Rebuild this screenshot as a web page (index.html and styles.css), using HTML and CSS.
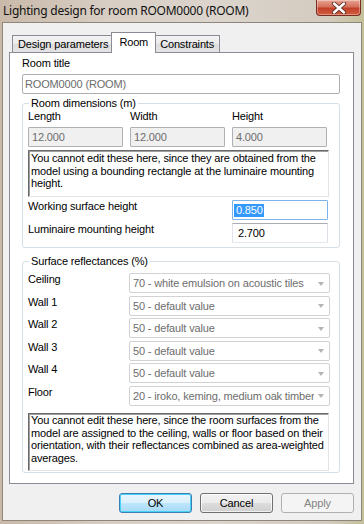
FILE: index.html
```html
<!DOCTYPE html>
<html>
<head>
<meta charset="utf-8">
<link rel="stylesheet" href="styles.css">
</head>
<body>
<div class="window">
  <div class="titlebar">
    <span class="title">Lighting design for room ROOM0000 (ROOM)</span>
    <div class="close">
      <svg width="16" height="12" viewBox="0 0 16 12">
        <path d="M3 1.5 L13 10.5 M13 1.5 L3 10.5" stroke="#5a2a22" stroke-width="4.2" stroke-linecap="round"/>
        <path d="M3 1.5 L13 10.5 M13 1.5 L3 10.5" stroke="#ffffff" stroke-width="2.4" stroke-linecap="round"/>
      </svg>
    </div>
  </div>
  <div class="face">
    <div class="tabs">
      <div class="tab">Design parameters</div>
      <div class="tab active">Room</div>
      <div class="tab">Constraints</div>
    </div>
    <div class="panel">
      <div class="label">Room title</div>
      <div class="input readonly title-input">ROOM0000 (ROOM)</div>

      <fieldset class="group dims-group">
        <legend>Room dimensions (m)</legend>
        <div class="dims">
          <div class="dim">
            <div class="label">Length</div>
            <div class="input disabled">12.000</div>
          </div>
          <div class="dim">
            <div class="label">Width</div>
            <div class="input disabled">12.000</div>
          </div>
          <div class="dim">
            <div class="label">Height</div>
            <div class="input disabled">4.000</div>
          </div>
        </div>
        <div class="note note-dims">You cannot edit these here, since they are obtained from the model using a bounding rectangle at the luminaire mounting height.</div>
        <div class="field-row first-row">
          <div class="label row-label">Working surface height</div>
          <div class="input focused"><span class="sel">0.850</span></div>
        </div>
        <div class="field-row">
          <div class="label row-label">Luminaire mounting height</div>
          <div class="input edit">2.700</div>
        </div>
      </fieldset>

      <fieldset class="group refl-group">
        <legend>Surface reflectances (%)</legend>
        <div class="combos">
          <div class="combo-row">
            <div class="label combo-label">Ceiling</div>
            <div class="combo"><span class="combo-text">70 - white emulsion on acoustic tiles</span><span class="arrow"></span></div>
          </div>
          <div class="combo-row">
            <div class="label combo-label">Wall 1</div>
            <div class="combo"><span class="combo-text">50 - default value</span><span class="arrow"></span></div>
          </div>
          <div class="combo-row">
            <div class="label combo-label">Wall 2</div>
            <div class="combo"><span class="combo-text">50 - default value</span><span class="arrow"></span></div>
          </div>
          <div class="combo-row">
            <div class="label combo-label">Wall 3</div>
            <div class="combo"><span class="combo-text">50 - default value</span><span class="arrow"></span></div>
          </div>
          <div class="combo-row">
            <div class="label combo-label">Wall 4</div>
            <div class="combo"><span class="combo-text">50 - default value</span><span class="arrow"></span></div>
          </div>
          <div class="combo-row">
            <div class="label combo-label">Floor</div>
            <div class="combo"><span class="combo-text">20 - iroko, keming, medium oak timber</span><span class="arrow"></span></div>
          </div>
        </div>
        <div class="note note-refl">You cannot edit these here, since the room surfaces from the model are assigned to the ceiling, walls or floor based on their orientation, with their reflectances combined as area-weighted averages.</div>
      </fieldset>
    </div>
    <div class="buttons">
      <div class="btn default">OK</div>
      <div class="btn">Cancel</div>
      <div class="btn disabled-btn">Apply</div>
    </div>
  </div>
</div>
</body>
</html>
```

FILE: styles.css
```css
* {
  box-sizing: border-box;
}

html, body {
  margin: 0;
  padding: 0;
}

body {
  width: 364px;
  height: 524px;
  overflow: hidden;
  font-family: "Liberation Sans", Arial, sans-serif;
  font-size: 11px;
  letter-spacing: -0.15px;
  color: #000;
}

.window {
  width: 364px;
  height: 524px;
  display: flex;
  flex-direction: column;
  background: linear-gradient(to right, #c9b9a9 0%, #d8cec4 30%, #dcd5cd 60%, #d3cbbf 90%, #c4c09a 100%);
}

.titlebar {
  height: 22px;
  display: flex;
  align-items: flex-start;
  flex: none;
}

.title {
  font-family: "Noto Sans", "Open Sans", sans-serif;
  font-size: 12px;
  line-height: 16px;
  padding: 3px 0 0 3px;
  color: #111;
  letter-spacing: -0.25px;
}

.close {
  margin-left: auto;
  margin-right: 3px;
  width: 45px;
  height: 16px;
  border: 1px solid #7a2b22;
  border-top: none;
  border-radius: 0 0 4px 4px;
  background: linear-gradient(to bottom, #e8a493 0%, #d5705c 45%, #c2402a 55%, #d25d3f 100%);
  display: flex;
  align-items: center;
  justify-content: center;
  box-shadow: inset 0 0 0 1px rgba(255, 255, 255, 0.35);
}

.face {
  flex: 1;
  margin: 0 2px 3px 2px;
  border: 1px solid #8f867c;
  background: #f0f0f0;
  padding: 9px 7px 0 6px;
  display: flex;
  flex-direction: column;
}

.tabs {
  display: flex;
  align-items: flex-end;
  height: 21px;
  margin-bottom: -1px;
  padding-left: 3px;
  position: relative;
  z-index: 1;
}

.tab {
  height: 17px;
  margin-bottom: 1px;
  padding: 0 5px;
  line-height: 16px;
  border: 1px solid #898c95;
  border-bottom: none;
  background: linear-gradient(to bottom, #f3f3f3 0%, #ebebeb 50%, #dddddd 51%, #e4e4e4 100%);
  margin-right: -1px;
}

.tab.active {
  height: 21px;
  margin: 0 -2px 0 -2px;
  padding: 0 7px;
  line-height: 19px;
  background: #fff;
  position: relative;
  z-index: 2;
}

.panel {
  height: 432px;
  border: 1px solid #898c95;
  background: #fff;
  padding: 4px 13px 0 12px;
  flex: none;
}

.label {
  line-height: 13px;
  height: 13px;
  white-space: nowrap;
}

.input {
  height: 20px;
  border: 1px solid #abadb3;
  border-color: #abadb3 #dbdfe6 #e3e9ef #e2e3ea;
  border-radius: 1px;
  line-height: 18px;
  padding-left: 3px;
  white-space: nowrap;
  overflow: hidden;
}

.title-input {
  margin-top: 4px;
  padding-left: 2px;
  color: #6d6d6d;
  background: #fff;
  border: 1px solid #adadad;
  border-radius: 2px;
}

.input.disabled {
  background: #f0f0f0;
  color: #6d6d6d;
  border: 1px solid #adb2b5;
}

.group {
  margin: 3px 0 0 0;
  border: 1px solid #d5dfe5;
  border-radius: 3px;
  padding: 0 10px 4px 5px;
  min-width: 0;
}

.group legend {
  padding: 0 2px;
  margin-left: 1px;
  line-height: 13px;
  color: #000;
}

.refl-group {
  margin-top: 7px;
  padding-bottom: 1px;
}

.dims {
  display: grid;
  grid-template-columns: 95px 95px 95px;
  column-gap: 7px;
}

.dim .input {
  margin-top: 4px;
}

.note {
  border: 1px solid;
  border-color: #696969 #e3e3e3 #e3e3e3 #696969;
  box-shadow: inset 1px 1px 0 #a0a0a0;
  background: #fff;
  line-height: 12.6px;
  padding: 1px 1px 0 2px;
}

.note-dims {
  margin-top: 3px;
  height: 47px;
}

.note-refl {
  margin-top: 7px;
  height: 58px;
  padding-top: 0;
}

.field-row {
  display: grid;
  grid-template-columns: 197px 96px;
  column-gap: 7px;
  margin-top: 3px;
}

.first-row {
  margin-top: 3px;
}

.focused {
  border: 1px solid #7eb4ea;
  padding-left: 1px;
  display: flex;
  align-items: center;
}

.sel {
  background: #3399ff;
  color: #fff;
  line-height: 13px;
  padding: 0 1px 0 2px;
}

.edit {
  padding-left: 5px;
}

.combos {
  display: flex;
  flex-direction: column;
  gap: 2.6px;
  padding-top: 5px;
}

.combo-row {
  display: flex;
  align-items: flex-start;
}

.combo-label {
  width: 101px;
  flex: none;
}

.combo {
  flex: 1;
  margin-right: -1px;
  height: 20px;
  border: 1px solid #d2d2d2;
  border-radius: 2px;
  background: #fff;
  color: #6d6d6d;
  display: flex;
  align-items: center;
  padding-left: 3px;
  white-space: nowrap;
  overflow: hidden;
}

.combo-text {
  flex: 1;
  overflow: hidden;
}

.arrow {
  width: 0;
  height: 0;
  border-left: 3.5px solid transparent;
  border-right: 3.5px solid transparent;
  border-top: 4px solid #b4b4b4;
  margin: 1px 5px 0 4px;
  flex: none;
}

.buttons {
  display: flex;
  justify-content: flex-end;
  gap: 8px;
  margin-top: 9px;
}

.btn {
  width: 73px;
  height: 20px;
  border: 1px solid #707070;
  border-radius: 3px;
  background: linear-gradient(to bottom, #f2f2f2 0%, #ebebeb 50%, #dddddd 51%, #cfcfcf 100%);
  text-align: center;
  line-height: 18px;
  box-shadow: inset 0 0 0 1px rgba(255, 255, 255, 0.7);
}

.btn.default {
  border-color: #3c7fb1;
  background: linear-gradient(to bottom, #eaf6fd 0%, #d9f0fc 50%, #bee6fd 51%, #a7d9f5 100%);
  box-shadow: inset 0 0 0 1px #48d1f8;
}

.btn.disabled-btn {
  border-color: #adb2b5;
  background: #f4f4f4;
  color: #838383;
  box-shadow: none;
}
```
